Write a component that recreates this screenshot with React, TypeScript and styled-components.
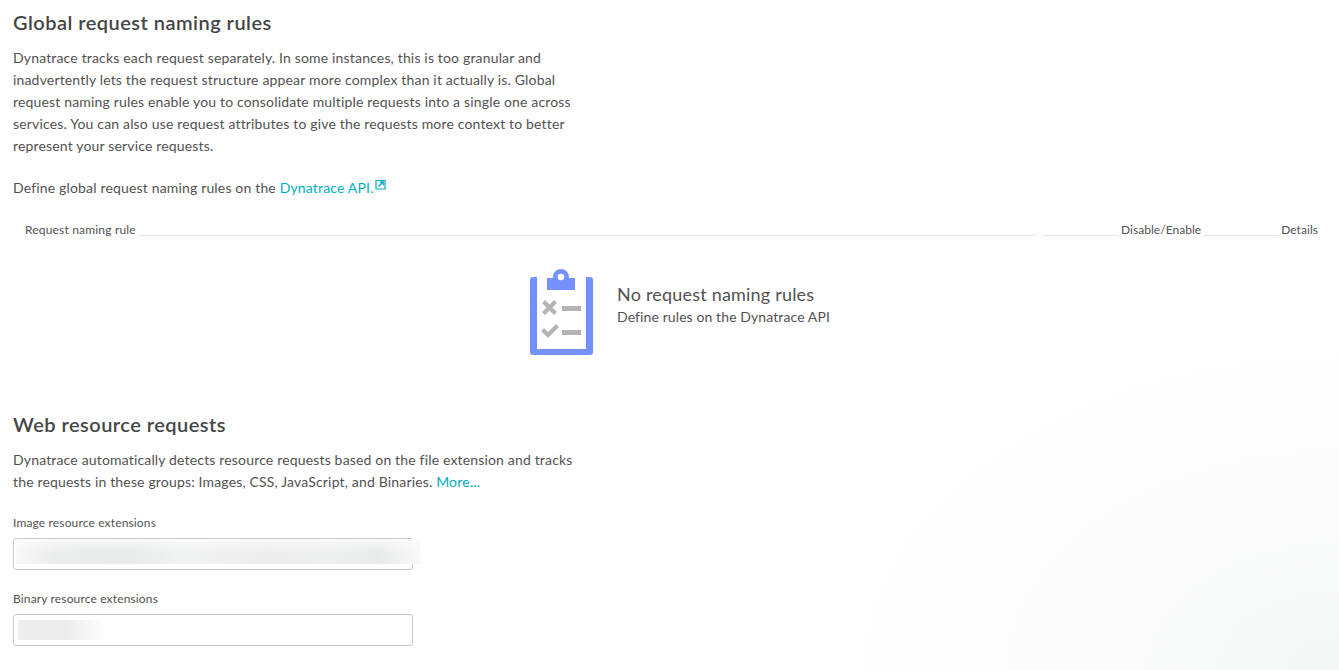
import React from 'react'
import styled, { createGlobalStyle } from 'styled-components'

const GlobalStyle = createGlobalStyle`
	html, body {
		margin: 0;
		padding: 0;
		height: 100%;
		overflow: hidden;
	}
	body {
		font-family: 'Lato', 'Open Sans', sans-serif;
		color: #525252;
		background: #fff;
	}
`

const Page = styled.div`
	box-sizing: border-box;
	width: 1339px;
	height: 670px;
	overflow: hidden;
	padding: 8px 0 0 13px;
	background: radial-gradient(500px 330px at 100% 100%, #f6f7f7 0%, #fff 100%);
`

const Title = styled.h2`
	margin: 0;
	font-size: 20px;
	line-height: 28px;
	font-weight: 600;
	letter-spacing: 0.47px;
	color: #454646;
`

const Text = styled.p<{ $top?: number }>`
	margin: ${p => p.$top ?? 0}px 0 0;
	width: 570px;
	font-size: 14px;
	line-height: 22px;
	letter-spacing: 0.165px;
`

const Link = styled.a`
	color: #00afc3;
	text-decoration: none;
`

const External = styled.svg`
	display: inline-block;
	width: 11px;
	height: 11px;
	margin-left: 1px;
	vertical-align: 3px;
`

const HeaderRow = styled.div`
	display: flex;
	align-items: flex-end;
	height: 20px;
	margin-top: 21px;
	padding-left: 12px;
	width: 1293px;
`

const HeaderCell = styled.span<{ $tight?: boolean }>`
	font-size: 12px;
	line-height: 16px;
	letter-spacing: ${p => (p.$tight ? '0.04px' : '0.18px')};
	white-space: nowrap;
	position: relative;
	top: -2px;
`

const Rule = styled.div<{ $width?: number; $left?: number; $right?: number }>`
	flex: ${p => (p.$width ? `0 0 ${p.$width}px` : '1')};
	height: 1px;
	margin: 0 ${p => p.$right ?? 3}px 4px ${p => p.$left ?? 3}px;
	background: #e6e6e6;
`

const Empty = styled.div`
	display: flex;
	align-items: center;
	gap: 23px;
	margin: 28px 0 0 517px;
	height: 88px;
`

const EmptyCopy = styled.div`
	margin-top: -16px;
`

const EmptyTitle = styled.div`
	font-size: 18px;
	line-height: 26px;
	letter-spacing: 0.2px;
`

const EmptyNote = styled.div`
	font-size: 14px;
	line-height: 20px;
	letter-spacing: 0.1px;
`

const SecondTitle = styled(Title)`
	margin-top: 54px;
`

const Label = styled.label<{ $top: number }>`
	display: block;
	margin-top: ${p => p.$top}px;
	font-size: 12px;
	line-height: 16px;
	letter-spacing: 0.15px;
`

const Field = styled.div`
	box-sizing: border-box;
	width: 400px;
	height: 32px;
	margin-top: 7px;
	border: 1px solid #c8c8c8;
	border-radius: 3px;
	background: #fff;
	padding: 0 0 0 2px;
`

const Redacted = styled.div<{ $width: number; $height: number; $top: number; $left: number; $wide?: boolean }>`
	width: ${p => p.$width}px;
	height: ${p => p.$height}px;
	margin: ${p => p.$top}px 0 0 ${p => p.$left}px;
	background: ${p =>
		p.$wide
			? `linear-gradient(180deg, rgba(255, 255, 255, 0.65) 0%, rgba(255, 255, 255, 0) 55%),
				linear-gradient(90deg, #f8f8f8 0%, #ebecec 10%, #e9eaea 28%, #f1f2f2 42%, #ecedec 62%, #eeefef 78%, #e9eaea 90%, #f9f9f9 100%)`
			: 'linear-gradient(90deg, #eeeeee 0%, #ececec 55%, #ffffff 100%)'};
`

const ClipboardIcon = () => (
	<svg width="64" height="88" viewBox="0 0 64 88">
		<path d="M7 9H3a3 3 0 0 0-3 3v72a3 3 0 0 0 3 3h57a3 3 0 0 0 3-3V12a3 3 0 0 0-3-3h-4v72H7z" fill="#7491ff" />
		<path d="M17 22V10h6V9a8 8 0 0 1 16 0v1h6v12z" fill="#7491ff" />
		<circle cx="31" cy="9" r="3.3" fill="#fff" />
		<path d="M12 35l3-3 4.500 4.500 4.500-4.500 3 3-4.500 4.500 4.500 4.500-3 3-4.500-4.500-4.500 4.500-3-3 4.500-4.500z" fill="#b4b4b4" />
		<rect x="32" y="38" width="19" height="5" fill="#b4b4b4" />
		<path d="M11 63l3-3 4 4 8-8 3 3-11 11z" fill="#b4b4b4" />
		<rect x="32" y="62" width="19" height="5" fill="#b4b4b4" />
	</svg>
)

export default function App() {
	return (
		<Page>
			<GlobalStyle />
			<Title>Global request naming rules</Title>
			<Text $top={11}>
				Dynatrace tracks each request separately. In some instances, this is too granular and inadvertently lets the
				request structure appear more complex than it actually is. Global request naming rules enable you to
				consolidate multiple requests into a single one across services. You can also use request attributes to give
				the requests more context to better represent your service requests.
			</Text>
			<Text $top={20}>
				Define global request naming rules on the <Link href="#">Dynatrace API.</Link>
				<External viewBox="0 0 11 11">
					<path d="M1 1.5h9v8.5H1z" fill="none" stroke="#00afc3" strokeWidth="1.2" />
					<path d="M3.500 7.500L7.500 3.500M5 3h3.200v3.200" fill="none" stroke="#00afc3" strokeWidth="1.4" />
				</External>
			</Text>
			<HeaderRow>
				<HeaderCell>Request naming rule</HeaderCell>
				<Rule />
				<Rule $width={75} $left={4} $right={3} />
				<HeaderCell $tight>Disable/Enable</HeaderCell>
				<Rule $width={76} $left={2} $right={2} />
				<HeaderCell $tight>Details</HeaderCell>
			</HeaderRow>
			<Empty>
				<ClipboardIcon />
				<EmptyCopy>
					<EmptyTitle>No request naming rules</EmptyTitle>
					<EmptyNote>Define rules on the Dynatrace API</EmptyNote>
				</EmptyCopy>
			</Empty>
			<SecondTitle>Web resource requests</SecondTitle>
			<Text $top={11}>
				Dynatrace automatically detects resource requests based on the file extension and tracks the requests in these
				groups: Images, CSS, JavaScript, and Binaries. <Link href="#">More...</Link>
			</Text>
			<Label $top={22}>Image resource extensions</Label>
			<Field>
				<Redacted $wide $width={404} $height={25} $top={0} $left={0} />
			</Field>
			<Label $top={21}>Binary resource extensions</Label>
			<Field>
				<Redacted $width={88} $height={20} $top={5} $left={2} />
			</Field>
		</Page>
	)
}
